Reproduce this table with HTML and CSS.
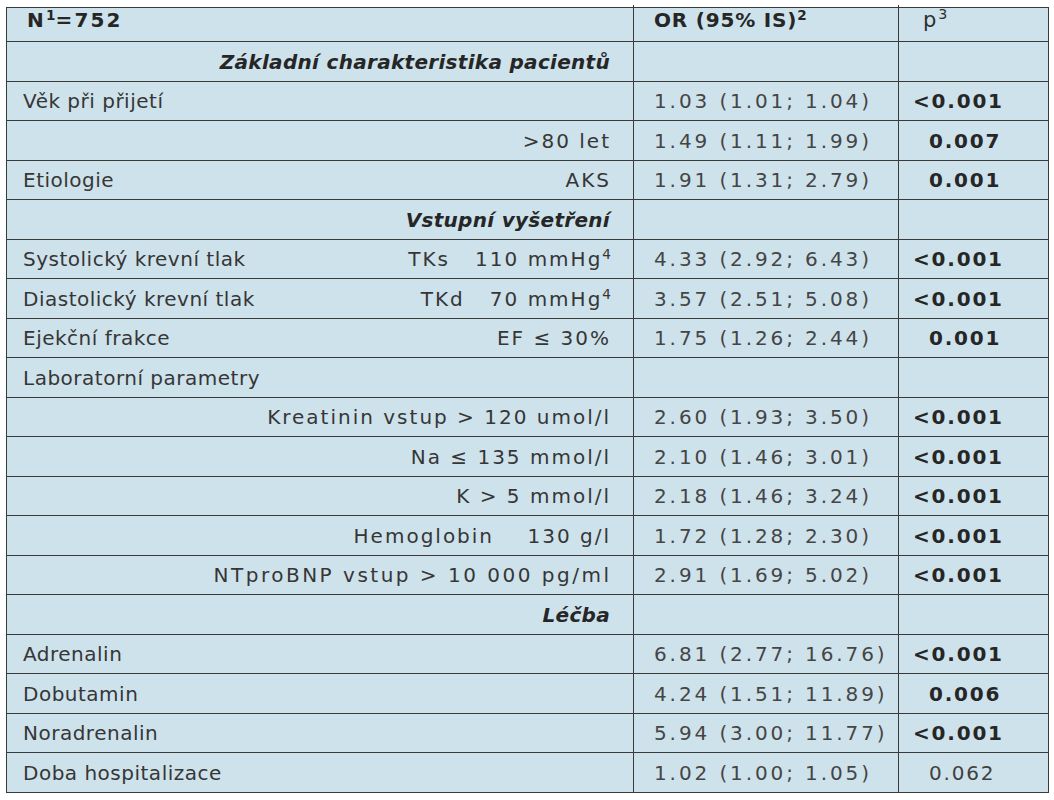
FILE: index.html
```html
<!DOCTYPE html>
<html lang="cs">
<head>
<meta charset="utf-8">
<title>Tabulka</title>
<link rel="stylesheet" href="styles.css">
</head>
<body>
<table class="tbl">
  <colgroup><col class="c1"><col class="c2"><col class="c3"></colgroup>
  <tr class="head">
    <td class="lab"><span class="hb n">N<sup>1</sup>=752</span></td>
    <td class="num tick"><span class="hb">OR (95% IS)<sup>2</sup></span></td>
    <td class="pv tick"><span class="p">p<sup>3</sup></span></td>
  </tr>
  <tr><td class="sec">Základní charakteristika pacientů</td><td></td><td></td></tr>
  <tr><td class="lab">Věk při přijetí</td><td class="num">1.03 (1.01; 1.04)</td><td class="pv b lt">&lt;0.001</td></tr>
  <tr><td class="lab r"><span class="w">&gt;80 let</span></td><td class="num">1.49 (1.11; 1.99)</td><td class="pv b">0.007</td></tr>
  <tr><td class="lab"><div class="split"><span>Etiologie</span><span class="w">AKS</span></div></td><td class="num">1.91 (1.31; 2.79)</td><td class="pv b">0.001</td></tr>
  <tr><td class="sec">Vstupní vyšetření</td><td></td><td></td></tr>
  <tr><td class="lab"><div class="split"><span>Systolický krevní tlak</span><span class="w">TKs&nbsp;&nbsp;&nbsp;110 mmHg<sup>4</sup></span></div></td><td class="num">4.33 (2.92; 6.43)</td><td class="pv b lt">&lt;0.001</td></tr>
  <tr><td class="lab"><div class="split"><span>Diastolický krevní tlak</span><span class="w">TKd&nbsp;&nbsp;&nbsp;70 mmHg<sup>4</sup></span></div></td><td class="num">3.57 (2.51; 5.08)</td><td class="pv b lt">&lt;0.001</td></tr>
  <tr><td class="lab"><div class="split"><span>Ejekční frakce</span><span class="w">EF ≤ 30%</span></div></td><td class="num">1.75 (1.26; 2.44)</td><td class="pv b">0.001</td></tr>
  <tr><td class="lab">Laboratorní parametry</td><td></td><td></td></tr>
  <tr><td class="lab r"><span class="w">Kreatinin vstup &gt; 120 umol/l</span></td><td class="num">2.60 (1.93; 3.50)</td><td class="pv b lt">&lt;0.001</td></tr>
  <tr><td class="lab r"><span class="w">Na ≤ 135 mmol/l</span></td><td class="num">2.10 (1.46; 3.01)</td><td class="pv b lt">&lt;0.001</td></tr>
  <tr><td class="lab r"><span class="w">K &gt; 5 mmol/l</span></td><td class="num">2.18 (1.46; 3.24)</td><td class="pv b lt">&lt;0.001</td></tr>
  <tr><td class="lab r"><span class="w">Hemoglobin&nbsp;&nbsp;&nbsp;&nbsp;130 g/l</span></td><td class="num">1.72 (1.28; 2.30)</td><td class="pv b lt">&lt;0.001</td></tr>
  <tr><td class="lab r"><span class="w nt">NTproBNP vstup &gt; 10&nbsp;000 pg/ml</span></td><td class="num">2.91 (1.69; 5.02)</td><td class="pv b lt">&lt;0.001</td></tr>
  <tr><td class="sec">Léčba</td><td></td><td></td></tr>
  <tr><td class="lab">Adrenalin</td><td class="num">6.81 (2.77; 16.76)</td><td class="pv b lt">&lt;0.001</td></tr>
  <tr><td class="lab">Dobutamin</td><td class="num">4.24 (1.51; 11.89)</td><td class="pv b">0.006</td></tr>
  <tr><td class="lab">Noradrenalin</td><td class="num">5.94 (3.00; 11.77)</td><td class="pv b lt">&lt;0.001</td></tr>
  <tr class="last"><td class="lab">Doba hospitalizace</td><td class="num tick">1.02 (1.00; 1.05)</td><td class="pv tick">0.062</td></tr>
</table>
</body>
</html>
```

FILE: styles.css
```css
html, body {
  margin: 0;
  padding: 0;
  background: #ffffff;
}
body {
  padding: 7px 0 0 6px;
}
.tbl {
  border-collapse: collapse;
  table-layout: fixed;
  width: 1042px;
  background: #cee2ec;
  color: #3a3a3a;
  font-family: "DejaVu Sans", sans-serif;
  font-size: 20px;
}
.c1 { width: 627px; }
.c2 { width: 265px; }
.c3 { width: 150px; }
.tbl td {
  border: 1px solid #3a3a3a;
  padding: 0;
  height: 39px;
  vertical-align: middle;
  white-space: nowrap;
}
.tbl tr:nth-child(2n+1) td { height: 38px; }
.tbl tr.head td { height: 33px; vertical-align: top; padding-top: 0; }
.tick { position: relative; }
.head .tick::before,
.last .tick::before {
  content: "";
  position: absolute;
  left: -1px;
  width: 1px;
  background: #3a3a3a;
}
.head .tick::before { top: -3px; height: 3px; }
.last .tick::before { bottom: -6px; height: 6px; }
.lab {
  font-size: 20px;
  letter-spacing: 0.5px;
  color: #363636;
  padding: 0 24px 0 16px !important;
}
.lab.r { text-align: right; }
.w {
  letter-spacing: 2px;
  margin-right: -2px;
}
.w.nt { letter-spacing: 2.5px; margin-right: -2.5px; }
.split {
  display: flex;
  justify-content: space-between;
}
.sec {
  font-weight: bold;
  font-style: italic;
  font-size: 20px;
  letter-spacing: 0.3px;
  text-align: right;
  padding-right: 23px !important;
  color: #262626;
}
.num {
  font-size: 20px;
  letter-spacing: 2.9px;
  color: #454545;
  padding-left: 20px !important;
}
.pv {
  font-size: 20px;
  letter-spacing: 1.8px;
  color: #404040;
  padding-left: 30px !important;
}
.pv.lt { padding-left: 14px !important; }
.pv.b { font-weight: bold; color: #262626; }
.hb {
  font-weight: bold;
  color: #262626;
  font-size: 20px;
  letter-spacing: 0.8px;
}
.hb.n { letter-spacing: 2.2px; }
.p { font-size: 21px; color: #2e2e2e; }
.head .lab { padding-left: 20px !important; }
.head .pv { padding-left: 24px !important; }
sup {
  font-size: 0.68em;
  vertical-align: 0.55em;
  line-height: 0;
  letter-spacing: 0;
}
```
